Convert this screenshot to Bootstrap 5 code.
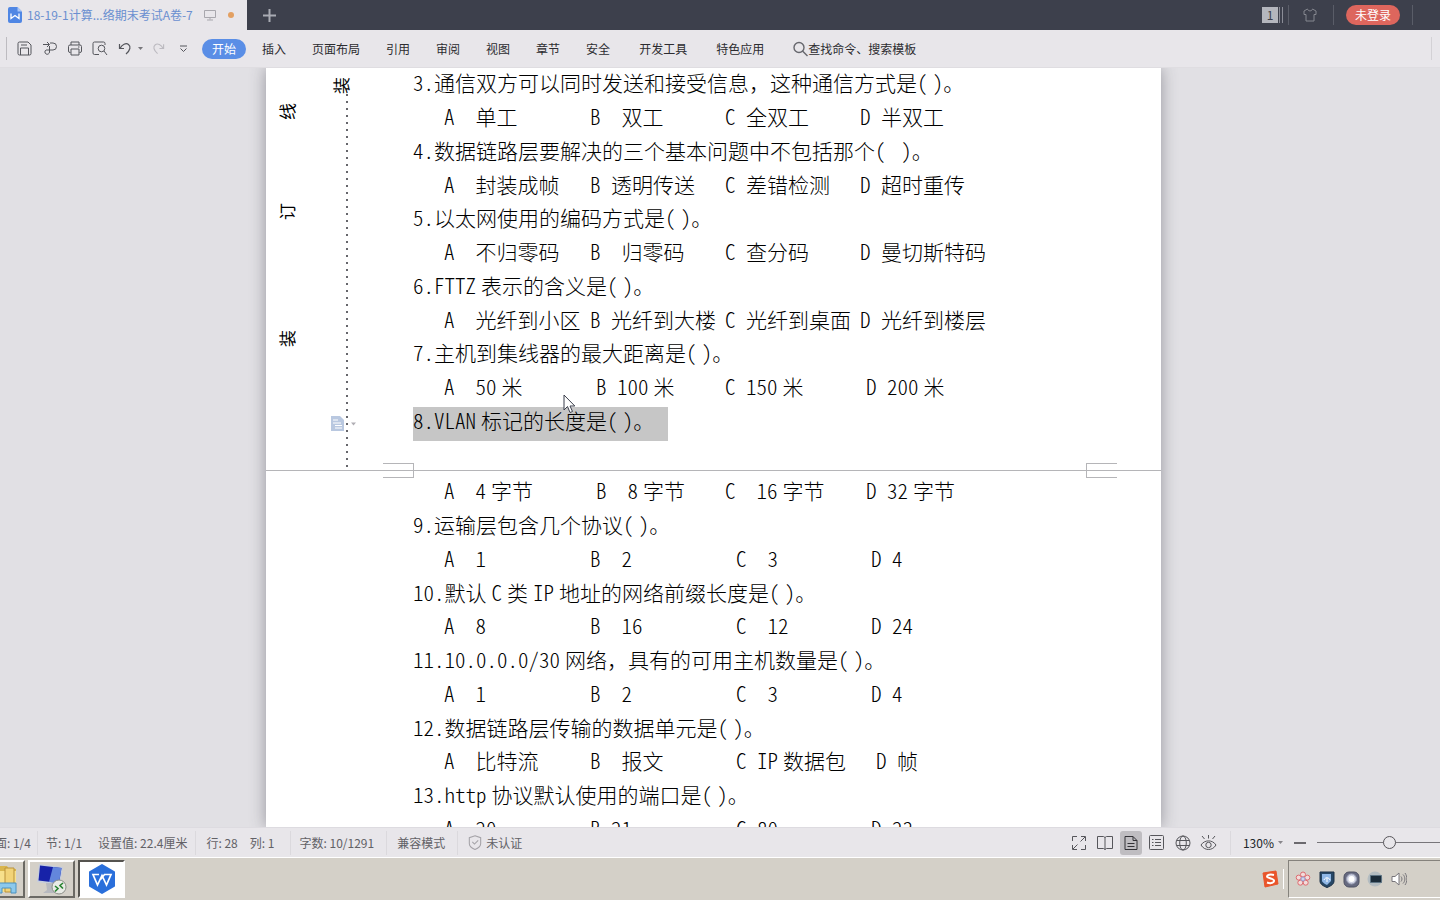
<!DOCTYPE html>
<html lang="zh-CN">
<head>
<meta charset="utf-8">
<meta name="viewport" content="width=device-width, initial-scale=1">
<title>18-19-1计算机网络期末考试A卷-7</title>
<link href="https://cdn.jsdelivr.net/npm/bootstrap@5.3.0/dist/css/bootstrap.min.css" rel="stylesheet">
<style>
  :root { --chrome: #e8e6ea; --ink: #2c2c30; --blue: #5a8ee6; }
  body { font: 12px/20px "Noto Sans CJK SC", sans-serif; color: var(--ink); background: #e1e0e4; }
  button { border: 0; background: none; padding: 0; color: inherit; font: inherit; white-space: nowrap; }
  svg { display: block; flex: none; fill: none; }
  svg:not([stroke]) { stroke: currentColor; }

  /* Title bar */
  .titlebar { height: 30px; background: #3d404c; color: #a9abb3; }
  .doc-tab { width: 247px; background: var(--chrome); color: #6a8fd0; padding: 0 13px 0 8px; gap: 5px; }
  .tab-dot { width: 6px; height: 6px; background: #e3a062; margin-left: 7px; }
  .win-count { width: 16px; height: 16px; line-height: 16px; background: #b4b6bd; color: #3d404c; text-align: center; }
  .count-bars { width: 4px; height: 16px; border: solid #8b8d97; border-width: 0 1px; margin: 0 5px 0 1px; }
  .bar-sep { width: 1px; height: 20px; background: #5a5d68; }
  .skin-btn { margin: 0 16px 0 14px; }
  .login-btn { width: 54px; height: 20px; line-height: 20px; background: #dd665d; color: #fff; margin: 0 12px; }
  .title-end { margin-right: 27px; }

  /* Ribbon */
  .ribbon { height: 38px; background: var(--chrome); border-bottom: 1px solid #dfdde1; }
  .quick { margin: 0 6px 0 5px; }
  .quick button { width: 25px; height: 24px; display: flex; align-items: center; justify-content: center; color: #55565c; }
  .quick .quick-caret { width: 9px; margin: 0 2px 0 -1px; }
  .quick .quick-redo { width: 23px; }
  .quick .quick-more { width: 26px; }
  .ribbon-sep { width: 1px; height: 23px; background: #bdbbc0; }
  .ribbon-start { margin-left: 6px; }
  .menu button { padding: 0 13px; }
  .menu .menu-on { background: var(--blue); color: #fff; padding: 0 10px; margin-right: 3px; }
  .menu .menu-wide { margin-left: 3px; }
  .search-box { width: 130px; border: 0; background: none; padding: 0; color: inherit; }
  .search-box::placeholder { color: var(--ink); opacity: 1; }

  /* Document */
  .canvas { min-height: 0; padding-right: 13px; }
  .sheet-stack { width: 895px; box-shadow: 0 0 15px rgba(60, 60, 70, .45); }
  .sheet { background: #fff; }
  .sheet-top { height: 402px; }
  .gutter { width: 147px; }
  .binding { writing-mode: vertical-rl; text-orientation: sideways; transform: rotate(180deg); font-size: 17px; line-height: 20px; color: #000; height: 17px; }
  .binding-outer { width: 20px; margin-left: 11px; padding-top: 35px; }
  .binding-outer .binding + .binding { margin-top: 83px; }
  .binding-outer .binding-last { margin-top: 110px !important; }
  .binding-rule { margin-left: 34px; padding-top: 9px; width: 20px; }
  .dotline { width: 2px; background: repeating-linear-gradient(#66666b 0 2px, transparent 2px 7px); margin: 0 0 3px 15px; }
  .paper { font-size: 21px; line-height: 26px; color: #000; font-weight: 300; font-feature-settings: "hwid"; }
  .paper p { margin: 0; height: 34px; padding-bottom: 8px; white-space: pre; }
  .paper p:nth-child(4n) { height: 33px; }
  .paper-first { padding-top: 1px; }
  .paper-next { padding: 6px 0 0 147px; }
  .paper .picked { background: #c6c6c6; width: 255px; }
  .full { font-feature-settings: normal; }
  .latin { margin-right: 5px; }
  .latin-mid { margin: 0 5px; }
  .opts { display: grid; padding-left: 31px; grid-template-columns: 146px 135px 135px auto; }
  .opts-b { grid-template-columns: 152px 129px 141px auto; }
  .opts-c { grid-template-columns: 146px 146px 135px auto; }
  .opts-d { grid-template-columns: 146px 146px 140px auto; }
  .seam { border-top: 1px solid #b5b5b8; }
  .crop-mark { position: absolute; top: -8px; width: 31px; height: 15px; border: 1px solid #b5b5b8; }
  .crop-l { left: 117px; border-left: 0; }
  .crop-r { right: 44px; border-right: 0; }
  .para-tool { position: absolute; left: 65px; top: 348px; }
  .pointer { position: absolute; left: 297px; top: 326px; }

  /* Status bar */
  .statusbar { height: 30px; background: var(--chrome); color: #626166; border-top: 1px solid #dddbe0; }
  .st-sep { width: 1px; height: 24px; background: #dbd9dd; }
  .st-page { width: 31px; overflow: hidden; margin-right: 6px; }
  .st-info { margin: 0 8px; }
  .st-wide { margin: 0 12px 0 10px; }
  .views button { width: 26px; height: 24px; display: flex; align-items: center; justify-content: center; color: #56565b; }
  .views .view-on { background: #bfbdc1; border-radius: 3px; width: 22px; margin: 0 2px; }
  .zoom-range { appearance: none; width: 123px; height: 16px; margin: 0 0 0 11px; background: linear-gradient(#77757a, #77757a) center / 100% 1px no-repeat; }
  .zoom-range::-webkit-slider-thumb { appearance: none; width: 13px; height: 13px; border: 1px solid #57555a; border-radius: 50%; background: var(--chrome); }
  .zoom-range::-moz-range-thumb { width: 11px; height: 11px; border: 1px solid #57555a; border-radius: 50%; background: var(--chrome); }
  .zoom-minus { width: 12px; height: 2px; background: #6b696e; margin-left: 11px; }

  /* Taskbar */
  .taskbar { height: 43px; background: #d4d0c8; border-top: 1px solid #fff; padding: 2px 0; }
  .tasks { gap: 3px; }
  .task { width: 47px; height: 38px; border: 2px solid; border-color: #fff #6b6964 #6b6964 #fff; display: flex; align-items: center; justify-content: center; }
  .task-first { width: 25px; border-left: 0; justify-content: flex-end; overflow: hidden; }
  .task-on { background: #fff; border-color: #55534f #fff #fff #55534f; }
  .tray { width: 152px; height: 38px; border: solid; border-width: 1px 0 1px 1px; border-color: #85827c #fff #fff #85827c; padding-left: 5px; gap: 6px; }
  .tray button { width: 18px; height: 18px; display: flex; align-items: center; justify-content: center; }
</style>
</head>
<body class="d-flex flex-column vh-100 overflow-hidden">

<header class="titlebar d-flex align-items-stretch flex-shrink-0">
  <div class="doc-tab d-flex align-items-center">
    <svg width="14" height="16" viewBox="0 0 14 16"><path d="M2 0h7.500L14 4.500V14a2 2 0 0 1-2 2H2a2 2 0 0 1-2-2V2a2 2 0 0 1 2-2z" fill="#4f86e4" stroke="none"/><path d="M9.500 0v4.500H14z" fill="#a9c6f7" stroke="none"/><path d="M3 6.500v5l4-3 4 3v-5" stroke="#fff" stroke-width="1.300"/></svg>
    <span class="text-nowrap">18-19-1计算...络期末考试A卷-7</span>
    <svg class="ms-auto" width="12" height="12" viewBox="0 0 12 12" stroke="#a8a7ad"><path d="M.5 1.500h11v7H.5zM6 8.500v2M3 11h6"/></svg>
    <span class="tab-dot rounded-circle"></span>
  </div>
  <button type="button" class="px-3" aria-label="新建标签"><svg width="13" height="13" viewBox="0 0 13 13" stroke-width="2"><path d="M6.500 0v13M0 6.500h13"/></svg></button>
  <div class="d-flex align-items-center ms-auto">
    <span class="win-count">1</span><span class="count-bars"></span>
    <span class="bar-sep"></span>
    <button type="button" class="skin-btn" aria-label="皮肤"><svg width="14" height="14" viewBox="0 0 14 14" stroke="#85878f"><path d="M4.500 1 1 3v3.500h2V13h8V6.500h2V3L9.500 1C9 3.500 5 3.500 4.500 1z"/></svg></button>
    <span class="bar-sep"></span>
    <button type="button" class="login-btn rounded-pill">未登录</button>
    <span class="bar-sep title-end"></span>
  </div>
</header>

<nav class="ribbon d-flex align-items-center flex-shrink-0">
  <span class="ribbon-sep ribbon-start"></span>
  <div class="quick d-flex align-items-center">
    <button type="button" aria-label="保存"><svg width="15" height="15" viewBox="0 0 15 15"><path d="M2.500 1h8.500L14 4v8.500a1.500 1.500 0 0 1-1.500 1.500h-10A1.500 1.500 0 0 1 1 12.500v-10A1.500 1.500 0 0 1 2.500 1zM3.500 14V7h8v7M4 4h6"/></svg></button>
    <button type="button" aria-label="输出为PDF"><svg width="16" height="15" viewBox="0 0 16 15"><path d="M1 3.500h6M5 1l2.500 2.500L5 6M8 2h3a3.500 3.500 0 0 1 0 7H4a2.300 2.300 0 1 0 3.500 2V5"/></svg></button>
    <button type="button" aria-label="打印"><svg width="16" height="15" viewBox="0 0 16 15"><path d="M4 4V1h8v3M3.500 11.500H3A1.500 1.500 0 0 1 1.500 10V5.500A1.500 1.500 0 0 1 3 4h10a1.500 1.500 0 0 1 1.500 1.500V10a1.500 1.500 0 0 1-1.500 1.500h-.5M4 8h8v6H4zM11 6h1.500"/></svg></button>
    <button type="button" aria-label="打印预览"><svg width="16" height="15" viewBox="0 0 16 15"><path d="M7 13.500H2.500A1.500 1.500 0 0 1 1 12V2.500A1.500 1.500 0 0 1 2.500 1h9A1.500 1.500 0 0 1 13 2.500V4M12 10l3 4"/><circle cx="9.500" cy="7.500" r="3.300"/></svg></button>
    <button type="button" aria-label="撤销"><svg width="14" height="13" viewBox="0 0 14 13" stroke-width="1.200"><path d="M1.500 2v4.500H6M2 6.500C4 2.500 8 .5 10.500 2.500s2 5.500-2.500 9.500"/></svg></button>
    <button type="button" class="quick-caret" aria-label="撤销列表"><svg width="5" height="3" viewBox="0 0 5 3"><path d="M0 0h5L2.500 3z" fill="#77767b" stroke="none"/></svg></button>
    <button type="button" class="quick-redo" aria-label="恢复"><svg width="13" height="13" viewBox="0 0 14 13" stroke="#bcbac0" stroke-width="1.200"><path d="M12.500 2v4.500H8M12 6.500C10 2.500 6 .5 3.500 2.500s-2 5.500 2.500 9.500"/></svg></button>
    <button type="button" class="quick-more" aria-label="自定义快速访问"><svg width="9" height="8" viewBox="0 0 9 8"><path d="M1 1h7M1.500 3.500l3 3 3-3"/></svg></button>
  </div>
  <div class="menu d-flex align-items-center">
    <button type="button" class="menu-on rounded-pill">开始</button>
    <button type="button">插入</button>
    <button type="button">页面布局</button>
    <button type="button">引用</button>
    <button type="button">审阅</button>
    <button type="button">视图</button>
    <button type="button">章节</button>
    <button type="button">安全</button>
    <button type="button" class="menu-wide">开发工具</button>
    <button type="button" class="menu-wide">特色应用</button>
  </div>
  <label class="d-flex align-items-center ms-3 ps-0" for="find"><svg width="15" height="16" viewBox="0 0 15 16" stroke-width="1.400" stroke="#66676d"><circle cx="6" cy="6.500" r="5"/><path d="M9.500 10l5 5"/></svg></label>
  <input id="find" class="search-box" type="text" placeholder="查找命令、搜索模板">
  <span class="ribbon-sep ms-auto me-2 pe-0 opacity-50"></span>
</nav>

<main class="canvas flex-grow-1 overflow-hidden d-flex justify-content-center">
  <div class="sheet-stack">
    <section class="sheet sheet-top d-flex position-relative">
      <div class="gutter d-flex flex-shrink-0">
        <div class="binding-outer d-flex flex-column">
          <span class="binding">线</span>
          <span class="binding">订</span>
          <span class="binding binding-last">装</span>
        </div>
        <div class="binding-rule d-flex flex-column">
          <span class="binding">装</span>
          <span class="dotline flex-grow-1"></span>
        </div>
      </div>
      <div class="paper paper-first">
        <p>3.通信双方可以同时发送和接受信息<span class="full">，</span>这种通信方式是(&#8197;)。</p>
        <p class="opts"><span>A  单工</span><span>B  双工</span><span>C 全双工</span><span>D 半双工</span></p>
        <p>4.数据链路层要解决的三个基本问题中不包括那个(&#8197; )。</p>
        <p class="opts"><span>A  封装成帧</span><span>B 透明传送</span><span>C 差错检测</span><span>D 超时重传</span></p>
        <p>5.以太网使用的编码方式是(&#8197;)。</p>
        <p class="opts"><span>A  不归零码</span><span>B  归零码</span><span>C 查分码</span><span>D 曼切斯特码</span></p>
        <p><span class="latin">6.FTTZ</span>表示的含义是(&#8197;)。</p>
        <p class="opts"><span>A  光纤到小区</span><span>B 光纤到大楼</span><span>C 光纤到桌面</span><span>D 光纤到楼层</span></p>
        <p>7.主机到集线器的最大距离是(&#8197;)。</p>
        <p class="opts opts-b"><span><span class="latin">A  50</span>米</span><span><span class="latin">B 100</span>米</span><span><span class="latin">C 150</span>米</span><span><span class="latin">D 200</span>米</span></p>
        <p class="picked"><span class="latin">8.VLAN</span>标记的长度是(&#8197;)。</p>
      </div>
      <button type="button" class="para-tool" aria-label="段落布局"><svg width="26" height="16" viewBox="0 0 26 16" stroke="none"><path d="M0 0h9l4 4v11H0z" fill="#b9c8e0"/><path d="M2 4h5M2 7h8M4 9.500h7M4 12h7" stroke="#fff"/><path d="M20 6.500h5l-2.500 3z" fill="#b0aeb4"/></svg></button>
      <svg class="pointer" width="13" height="20" viewBox="0 0 13 20"><path d="M1 1v15l3.500-3.500L7 18.500l2.500-1L7 12h4.800z" fill="#fff" stroke="#3b3f4c"/></svg>
    </section>
    <section class="sheet seam position-relative">
      <span class="crop-mark crop-l"></span><span class="crop-mark crop-r"></span>
      <div class="paper paper-next">
        <p class="opts opts-b"><span><span class="latin">A  4</span>字节</span><span><span class="latin">B  8</span>字节</span><span><span class="latin">C  16</span>字节</span><span><span class="latin">D 32</span>字节</span></p>
        <p>9.运输层包含几个协议(&#8197;)。</p>
        <p class="opts opts-c"><span>A  1</span><span>B  2</span><span>C  3</span><span>D 4</span></p>
        <p>10.默认<span class="latin-mid">C</span>类<span class="latin-mid">IP</span>地址的网络前缀长度是(&#8197;)。</p>
        <p class="opts opts-c"><span>A  8</span><span>B  16</span><span>C  12</span><span>D 24</span></p>
        <p><span class="latin">11.10.0.0.0/30</span>网络<span class="full">，</span>具有的可用主机数量是(&#8197;)。</p>
        <p class="opts opts-c"><span>A  1</span><span>B  2</span><span>C  3</span><span>D 4</span></p>
        <p>12.数据链路层传输的数据单元是(&#8197;)。</p>
        <p class="opts opts-d"><span>A  比特流</span><span>B  报文</span><span><span class="latin">C IP</span>数据包</span><span>D 帧</span></p>
        <p><span class="latin">13.http</span>协议默认使用的端口是(&#8197;)。</p>
        <p class="opts opts-c"><span>A  20</span><span>B 21</span><span>C 80</span><span>D 23</span></p>
      </div>
    </section>
  </div>
</main>

<footer class="statusbar d-flex align-items-center flex-shrink-0 text-nowrap">
  <span class="st-page d-flex justify-content-end">面: 1/4</span><span class="st-sep"></span>
  <span class="st-info">节: 1/1</span><span class="st-info">设置值: 22.4厘米</span><span class="st-sep"></span>
  <span class="st-wide">行: 28</span><span>列: 1</span><span class="st-sep ms-3"></span>
  <span class="st-info">字数: 10/1291</span><span class="st-sep ms-1"></span>
  <span class="st-wide">兼容模式</span><span class="st-sep"></span>
  <svg class="st-wide me-1" width="14" height="15" viewBox="-.5 0 13 14" stroke="#a5a3a8"><path d="M6 .7 11.300 2.500V8c0 2.500-2.500 4.500-5.300 5.500C3.200 12.500.7 10.500.7 8V2.500zM3.500 6.500l2 2 3.500-3.500"/></svg>
  <span>未认证</span>
  <div class="views d-flex align-items-center ms-auto">
    <button type="button" aria-label="全屏"><svg width="16" height="16" viewBox="0 0 16 16"><path d="M1.500 6V1.500H6M10 1.500h4.500V6M14.500 10v4.500H10M6 14.500H1.500V10M14 2 9.500 6.500M2 14l4.500-4.500"/></svg></button>
    <button type="button" aria-label="阅读版式"><svg width="16" height="16" viewBox="0 0 16 16"><path d="M8 2.500 6.500 1.500h-6v12h6L8 14.500l1.500-1h6v-12h-6zM8 2.500v12"/></svg></button>
    <button type="button" class="view-on" aria-label="页面视图"><svg width="14" height="16" viewBox="0 0 14 16" stroke="#333237"><path d="M1 1.500h8l4 4v9H1zM9 1.500v4h4M3.500 8.500h7M3.500 11.500h7"/></svg></button>
    <button type="button" aria-label="大纲"><svg width="15" height="15" viewBox="0 0 15 15"><rect x=".5" y=".5" width="14" height="14" rx="1"/><path d="M3 4.500h1.500M6 4.500h6M3 7.500h1.500M6 7.500h6M3 10.500h1.500M6 10.500h6"/></svg></button>
    <button type="button" aria-label="Web版式"><svg width="16" height="16" viewBox="0 0 16 16"><circle cx="8" cy="8" r="7"/><ellipse cx="8" cy="8" rx="3.300" ry="7"/><path d="M1.500 5.500h13M1.500 10.500h13"/></svg></button>
    <button type="button" aria-label="护眼模式"><svg width="17" height="17" viewBox="0 0 17 17"><path d="M1 11c3.500-5.500 11.500-5.500 15 0-3.500 6-11.500 6-15 0zM8.500 4.500V1M4.500 5 2 2M12.500 5 15 2"/><circle cx="8.500" cy="11" r="2.700"/></svg></button>
  </div>
  <span class="st-sep ms-2"></span>
  <button type="button" class="d-flex align-items-center ps-2 ms-1 text-dark">130%<svg class="ms-1" width="5" height="3" viewBox="0 0 5 3"><path d="M0 0h5L2.500 3z" fill="#88868b" stroke="none"/></svg></button>
  <button type="button" class="zoom-minus" aria-label="缩小"></button>
  <input class="zoom-range" type="range" min="0" max="100" value="60" aria-label="显示比例">
</footer>

<div class="taskbar d-flex align-items-center flex-shrink-0">
  <div class="tasks d-flex align-items-center">
    <button type="button" class="task task-first" aria-label="资源管理器"><svg class="me-1" width="34" height="32" viewBox="0 0 34 32" stroke="none"><path d="M2 6h10l2-3h8l2 3h7v22H2z" fill="#d9b64e"/><path d="M4 8h27v21H4z" fill="#f7e08c"/><path d="M20 5h9v24h-9z" fill="#f2d377" stroke="#b9923a"/><path d="M12 30V20h19v10h-5v-5h-9v5z" fill="#8cc9ec" stroke="#4a91c0"/></svg></button>
    <button type="button" class="task" aria-label="远程桌面"><svg width="32" height="32" viewBox="0 0 32 32" stroke="none"><path d="M3 1 27 4 24 22 1 19z" fill="#c5cddd"/><path d="M4 2.500 25.500 5 23 20 2.500 17.500z" fill="#1722a8"/><path d="M17 4 25.500 5 23 20 13 19z" fill="#6386dc"/><path d="M10 20h8l2 7 4 3H7l4-3z" fill="#b7b9bf"/><circle cx="23" cy="24" r="7" fill="#e9ebe6" stroke="#8b8e88"/><path d="M19 23l3 2.500-3 3M27 20l-3 2.500 3 3" fill="none" stroke="#27832f" stroke-width="1.600"/></svg></button>
    <button type="button" class="task task-on" aria-label="WPS"><svg width="30" height="32" viewBox="0 0 30 32"><path d="M15 2 27 9v14L15 30 3 23V9z" fill="#2a6fdb" stroke="#2a6fdb" stroke-width="2" stroke-linejoin="round"/><path d="M12 11.500H6L10.500 22 15 12.500 19.500 22 24 11.500h-6.500l-4 5" stroke="#fff" stroke-width="1.700"/></svg></button>
  </div>
  <button type="button" class="ms-auto" aria-label="搜狗输入法"><svg width="17" height="18" viewBox="0 0 17 18"><path d="M1 3 14 1l2 13-13 3z" fill="#e9552b" stroke="#e9552b"/><path d="M12 5C8 4 5 5 5 6.500s6.500 2 7 4-3 3.500-7 2" stroke="#fff" stroke-width="2"/></svg></button>
  <span class="bar-sep bg-white ms-1 me-1"></span>
  <div class="tray d-flex align-items-center">
    <button type="button" aria-label="云服务"><svg width="16" height="16" viewBox="0 0 16 16" stroke="#de6b70"><g fill="#f2dcda"><circle cx="8" cy="3.500" r="2.500"/><circle cx="12.300" cy="6.600" r="2.500"/><circle cx="10.700" cy="11.700" r="2.500"/><circle cx="5.300" cy="11.700" r="2.500"/><circle cx="3.700" cy="6.600" r="2.500"/></g><circle cx="8" cy="8" r="2" fill="#cfd3ea" stroke="#9aa0cf"/></svg></button>
    <button type="button" aria-label="安全卫士"><svg width="16" height="17" viewBox="0 0 16 17"><path d="M1 1h14v9c0 3-3 5-7 6.500C4 15 1 13 1 10z" fill="#274867" stroke="#1c3047"/><path d="M3 3h9v7l-4 4c-3-1.500-5-3-5-4z" fill="#8fb7e6" stroke="none"/><path d="M5 9c1-3 5-3 6 0M8 7v4" stroke="#fff"/></svg></button>
    <button type="button" aria-label="管理工具"><svg width="17" height="17" viewBox="0 0 17 17"><rect x="1" y="1" width="15" height="15" rx="5" fill="#666a80" stroke="#4d5063"/><circle cx="8.500" cy="8" r="5" fill="#cfd3e2" stroke="#9da2b8"/><circle cx="8.500" cy="8" r="3" fill="#fff" stroke="none"/></svg></button>
    <button type="button" aria-label="显卡"><svg width="16" height="16" viewBox="0 0 16 16"><circle cx="8" cy="8" r="7.500" fill="#b3bcc1" stroke="none"/><path d="M3.500 4.500h11v7h-11z" fill="#1b2c3a" stroke="#5d7383"/></svg></button>
    <button type="button" aria-label="音量"><svg width="16" height="16" viewBox="0 0 16 16" stroke="#77757a"><path d="M1 5.500h3L8 2v12l-4-3.500H1z" fill="#fff"/><path d="M10 5.500c1.300 1.500 1.300 3.500 0 5M12 3.500c2.500 2.500 2.500 6.500 0 9M14 2c2.500 3.500 2.500 8.500 0 12"/></svg></button>
  </div>
</div>

<script src="https://cdn.jsdelivr.net/npm/bootstrap@5.3.0/dist/js/bootstrap.bundle.min.js"></script>
</body>
</html>
